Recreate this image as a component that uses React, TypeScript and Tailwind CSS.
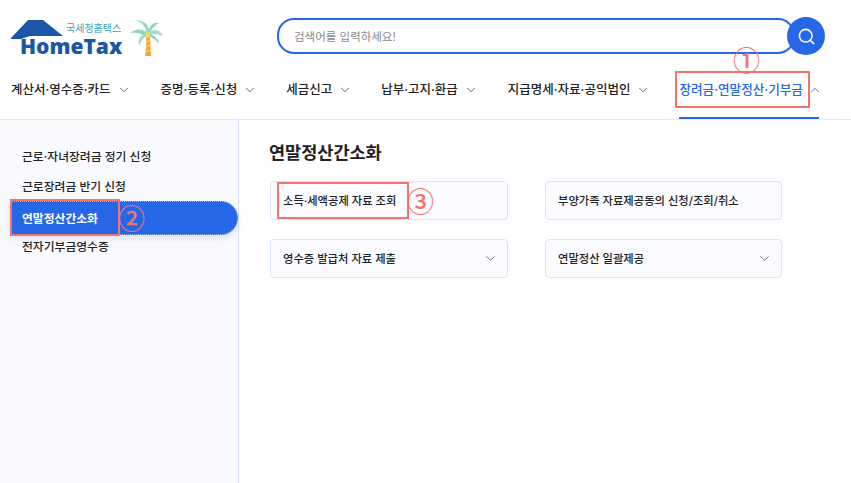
import { ChevronDown, ChevronUp, Search } from "lucide-react";

const navItems = [
    { label: "계산서·영수증·카드", gap: "mr-[30px]" },
    { label: "증명·등록·신청", gap: "mr-[29px]" },
    { label: "세금신고", gap: "mr-[29px]" },
    { label: "납부·고지·환급", gap: "mr-[30px]" },
    { label: "지급명세·자료·공익법인", gap: "mr-[30px]" },
];

const sideItems = ["근로·자녀장려금 정기 신청", "근로장려금 반기 신청"];

function Logo() {
    return (
        <div className="relative flex h-[36px] w-[153px] items-end">
            <svg width="54" height="20" viewBox="0 0 54 20" className="absolute left-0 top-0">
                <path d="M0 18 L17 0 L32 0 L52 16 L19 16 L10 19 L0 19 Z" fill="#1b57a8" />
            </svg>
            <span className="absolute left-[55px] top-[1px] whitespace-nowrap text-[10px] leading-[14px] text-[#3aa0b8]">국세청홈택스</span>
            <span className="ml-[9px] whitespace-nowrap font-['Open_Sans'] text-[21px] font-extrabold leading-[19px] text-[#1b57a8]">HomeTax</span>
            <svg width="34" height="37" viewBox="0 0 34 37" className="absolute left-[119px] top-0">
                <path d="M15 36 C16 28 16.5 22 16 14 L20 14 C20.5 22 20.5 29 21 36 Z" fill="#f6a534" />
                <path d="M15.5 32 L21 30 M15.8 27 L20.5 25 M16 22 L20.5 20" stroke="#fde3a0" strokeWidth="1" />
                <circle cx="17.5" cy="14" r="4" fill="#f6dc5a" />
                <path d="M17 12 C15 6 11 2 6 0 C13 0 19 4 19 11 Z" fill="#9ad9c8" />
                <path d="M18 12 C20 5 24 2 29 3 C25 5 22 9 19 13 Z" fill="#8ed3c4" />
                <path d="M17 13 C11 8 5 9 0 13 C6 12 11 13 15 16 Z" fill="#8ed3c4" />
                <path d="M19 12 C25 8 30 10 33 16 C28 14 24 13 20 15 Z" fill="#a3dccd" />
                <path d="M15 14 C10 15 8 20 9 26 C11 21 13 18 16 16 Z" fill="#9ad9c8" />
                <path d="M20 14 C24 15 28 18 29 24 C26 20 23 18 19 16 Z" fill="#8ed3c4" />
            </svg>
        </div>
    );
}

function Card({ label, arrow }: { label: string; arrow?: boolean }) {
    return (
        <div className="flex h-[39px] items-center justify-between rounded-[4px] border border-[#d9e5fb] bg-[#fafcff] pl-[12px] pr-[9px]">
            <span className="whitespace-nowrap pt-[2px] text-[11.3px] font-medium text-[#222]">{label}</span>
            {arrow && <ChevronDown className="h-[15px] w-[15px] text-[#666]" strokeWidth={1.5} />}
        </div>
    );
}

export default function App() {
    return (
        <div className="relative flex h-[483px] w-[851px] flex-col overflow-hidden bg-white font-['Inter','Noto_Sans_CJK_KR',sans-serif]">
            <header className="h-[120px] shrink-0 border-b border-[#e6e9f2]">
                <div className="flex h-[71px] items-start pl-[11px] pt-[17px]">
                    <div className="pt-[3px]">
                        <Logo />
                    </div>
                    <div className="ml-[113px] flex items-center">
                        <div className="flex h-[36px] w-[518px] items-center rounded-[17px] border-2 border-[#2667e8] bg-white pl-[15px] pt-[3px]">
                            <span className="whitespace-nowrap text-[11.5px] text-[#8a8a8a]">검색어를 입력하세요!</span>
                        </div>
                        <button className="-ml-[8px] flex h-[38px] w-[38px] items-center justify-center rounded-full bg-[#2667e8]">
                            <Search className="h-[19px] w-[19px] text-white" strokeWidth={2} />
                        </button>
                    </div>
                </div>
                <nav className="flex h-[48px] items-start pl-[11px] pt-[6px]">
                    {navItems.map((item) => (
                        <div key={item.label} className={`flex h-[24px] shrink-0 items-end gap-[6px] ${item.gap}`}>
                            <span className="whitespace-nowrap text-[12.5px] font-medium leading-[22px] text-[#222]">{item.label}</span>
                            <ChevronDown className="mb-[4px] h-[14px] w-[14px] text-[#555]" strokeWidth={1.5} />
                        </div>
                    ))}
                    <div className="-ml-[1px] flex h-[42px] w-[140px] shrink-0 items-start gap-[5px] border-b-2 border-[#2667e8] pt-[2px]">
                        <span className="whitespace-nowrap text-[12.6px] font-medium leading-[22px] text-[#2667e8]">장려금·연말정산·기부금</span>
                        <ChevronUp className="-mr-[6px] mt-[4px] h-[14px] w-[14px] shrink-0 text-[#2667e8]" strokeWidth={1.5} />
                    </div>
                </nav>
            </header>

            <div className="flex flex-1">
                <aside className="w-[239px] shrink-0 border-r border-[#d6dffa] bg-[#f9fafe] pl-[10px] pt-[22px]">
                    {sideItems.map((item) => (
                        <div key={item} className="flex h-[29.5px] items-center whitespace-nowrap pl-[12px] pt-[3px] text-[11.8px] font-medium text-[#222]">
                            {item}
                        </div>
                    ))}
                    <div className="flex h-[34px] items-center rounded-r-[17px] border border-dotted border-[#9db8f0] bg-[#2667e8] pl-[11px] pt-[3px] text-[11.8px] font-bold text-white shadow-[0_3px_6px_rgba(60,80,140,0.15)]">
                        연말정산간소화
                    </div>
                    <div className="flex h-[22px] items-center pl-[12px] pt-[3px] text-[11.8px] font-medium text-[#222]">전자기부금영수증</div>
                </aside>

                <main className="flex-1 pl-[30px] pt-[20px]">
                    <h2 className="text-[17.5px] font-bold leading-[26px] text-[#222]">연말정산간소화</h2>
                    <div className="ml-[1px] mt-[15px] grid w-[512px] grid-cols-[238px_237px] gap-x-[37px] gap-y-[19px]">
                        <Card label="소득·세액공제 자료 조회" />
                        <Card label="부양가족 자료제공동의 신청/조회/취소" />
                        <Card label="영수증 발급처 자료 제출" arrow />
                        <Card label="연말정산 일괄제공" arrow />
                    </div>
                </main>
            </div>

            {/* 빨간 표시 */}
            <div className="absolute left-[675px] top-[71px] h-[37px] w-[135px] border-2 border-[#f4736b]" />
            <div className="absolute left-[10px] top-[199px] h-[37px] w-[110px] border-2 border-[#f4736b]" />
            <div className="absolute left-[277px] top-[182px] h-[37px] w-[132px] border-2 border-[#f4736b]" />
            <span className="absolute left-[733px] top-[40px] font-['Noto_Sans_CJK_KR'] text-[27px] font-medium leading-[40px] text-[#f4736b]">①</span>
            <span className="absolute left-[118px] top-[198px] font-['Noto_Sans_CJK_KR'] text-[27px] font-medium leading-[40px] text-[#f4736b]">②</span>
            <span className="absolute left-[407px] top-[181px] font-['Noto_Sans_CJK_KR'] text-[27px] font-medium leading-[40px] text-[#f4736b]">③</span>
        </div>
    );
}
